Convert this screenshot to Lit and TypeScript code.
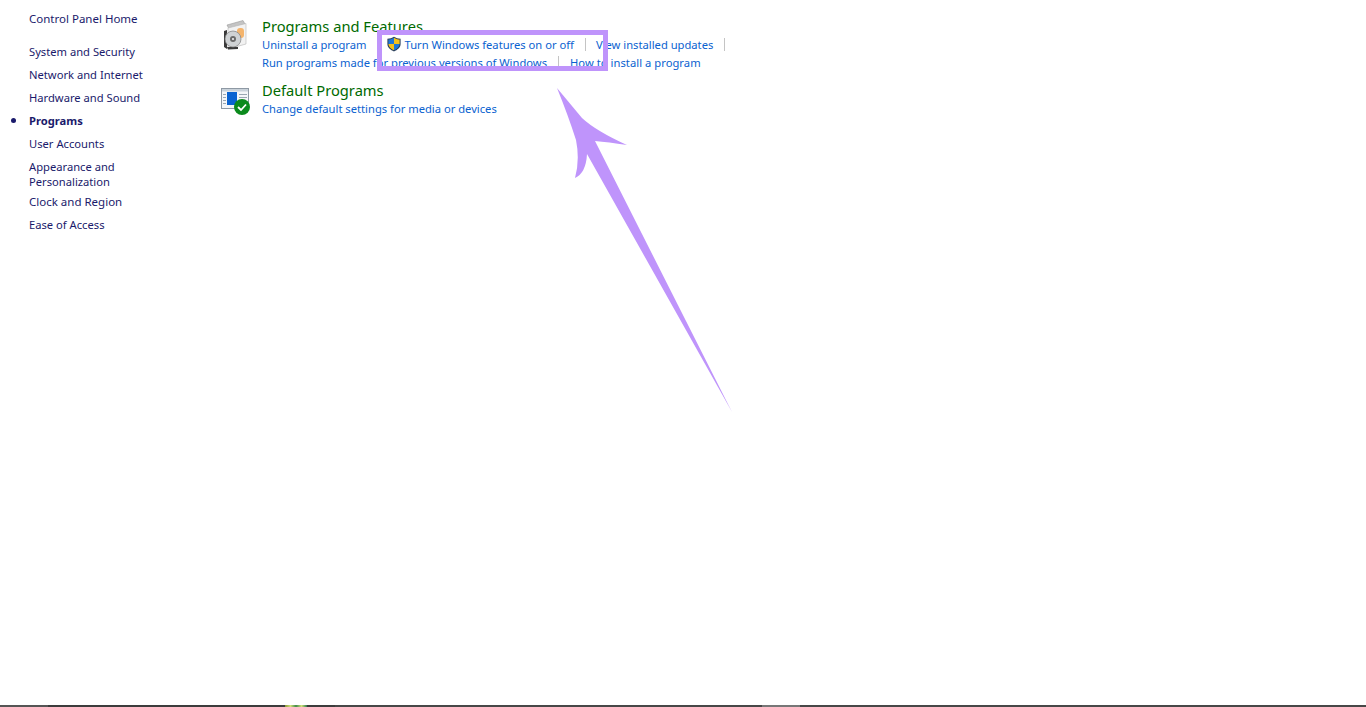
import { LitElement, html, css, svg } from "lit";
import { customElement } from "lit/decorators.js";

const nav = ["System and Security", "Network and Internet", "Hardware and Sound", "Programs", "User Accounts"];

@customElement("app-root")
export class AppRoot extends LitElement {
  static styles = css`
    :host { display: flex; flex-direction: column; height: 707px; position: relative; background: #fff; overflow: hidden;
      font-family: "Noto Sans", "Open Sans", sans-serif; font-size: 11.2px; line-height: 15px; }
    .main { flex: 1; display: flex; min-height: 0; }
    .side { width: 220px; padding: 11px 0 0 29px; box-sizing: border-box; color: #1a1a6b; flex: none; }
    .side div { margin-bottom: 8px; position: relative; }
    .side .home { margin-bottom: 18px; font-size: 11.5px; }
    .side .wide { font-size: 11.5px; }
    .side .tight { margin-bottom: 5px; }
    .side .on { font-weight: 700; }
    .side .on::before { content: ""; position: absolute; left: -18px; top: 5px; width: 5px; height: 5px; border-radius: 50%; background: #1a1a6b; }
    .content { flex: 1; padding-top: 17px; }
    .group { display: flex; margin-bottom: 10px; }
    .ico { width: 42px; flex: none; }
    .ico svg { display: block; }
    .ico .p { margin: 3px 0 0 3px; }
    .ico .d { margin: 5px 0 0 1px; }
    h2 { margin: 0; font-weight: 400; font-size: 14.7px; line-height: 18px; color: #006a00; }
    .row { display: flex; height: 18px; align-items: center; color: #0a62d0; white-space: nowrap; }
    .row span { display: inline-flex; align-items: center; height: 13px; }
    .sep { border-right: 1px solid #c4c4c4; padding-right: 11px; margin-right: 10px; }
    .row svg { margin-right: 3px; }
    .shieldcell { margin-left: -3px; }
    .how { margin-left: 1px; letter-spacing: 0.04px; }
    .foot { height: 2px; display: flex; background: #474747; flex: none; }
    .foot i { display: block; height: 2px; }
    .f1 { width: 48px; background: #555; }
    .f2 { width: 237px; background: #3c3c3c; }
    .f3 { width: 22px; background: linear-gradient(90deg, #8a9a3a, #cfe07a, #3f8a4a, #cfe07a, #2e7a50); }
    .f4 { width: 28px; background: #3c3c3c; }
    .f5 { width: 427px; background: #474747; }
    .f6 { width: 38px; background: #777; }
    .hl { position: absolute; left: 377px; top: 30px; width: 231px; height: 41px; box-sizing: border-box; border: 5.5px solid #bf94fb; }
    .arrow { position: absolute; left: 0; top: 0; pointer-events: none; }
  `;

  render() {
    return html`
      <div class="main">
        <div class="side">
          <div class="home">Control Panel Home</div>
          ${nav.map((n) => html`<div class=${n === "Programs" ? "on" : ""}>${n}</div>`)}
          <div class="tight">Appearance and<br />Personalization</div>
          <div class="wide">Clock and Region</div>
          <div>Ease of Access</div>
        </div>
        <div class="content">
          <div class="group">
            <div class="ico">${this.programsIcon()}</div>
            <div>
              <h2>Programs and Features</h2>
              <div class="row">
                <span class="sep">Uninstall a program</span>
                <span class="shieldcell">${this.shield()}</span>
                <span class="sep">Turn Windows features on or off</span>
                <span class="sep">View installed updates</span>
              </div>
              <div class="row">
                <span class="sep">Run programs made for previous versions of Windows</span>
                <span class="how">How to install a program</span>
              </div>
            </div>
          </div>
          <div class="group">
            <div class="ico">${this.defaultIcon()}</div>
            <div>
              <h2>Default Programs</h2>
              <div class="row"><span>Change default settings for media or devices</span></div>
            </div>
          </div>
        </div>
      </div>
      <div class="foot">
        <i class="f1"></i><i class="f2"></i><i class="f3"></i><i class="f4"></i><i class="f5"></i><i class="f6"></i>
      </div>
      <div class="hl"></div>
      <svg class="arrow" width="1366" height="707" viewBox="0 0 1366 707">
        <path fill="#bf94fb" d="M557 88 Q572 106 582 118 Q596 131 627 145 Q608 142 595 141 L732 412 L587 154 Q586 173 575 178 Q580 160 576 140 Q568 115 557 88 Z" />
      </svg>
    `;
  }

  shield() {
    return svg`<svg width="16" height="16" viewBox="0 0 16 16">
      <path d="M8 .7 C6 2 4 2.6 1.4 2.7 V8 C1.4 11.5 4.5 14 8 15.4 C11.5 14 14.6 11.5 14.6 8 V2.7 C12 2.6 10 2 8 .7Z" fill="#2a3f5c"/>
      <path d="M8 1.8 V8 H2.4 V3.6 C4.4 3.5 6.3 3 8 1.8Z" fill="#1f78d6"/>
      <path d="M8 1.8 C9.7 3 11.6 3.5 13.6 3.6 V8 H8Z" fill="#f5c21b"/>
      <path d="M2.4 8 H8 V14.2 C5 13 2.6 11 2.4 8Z" fill="#f5c21b"/>
      <path d="M8 8 H13.6 C13.4 11 11 13 8 14.2Z" fill="#1f78d6"/>
    </svg>`;
  }

  programsIcon() {
    return svg`<svg class="p" width="26" height="30" viewBox="0 0 26 30">
      <path d="M4 5 L20 0.5 L22 4 L6 9Z" fill="#c4c4c4" stroke="#9a9a9a" stroke-width=".6"/>
      <path d="M5 8 L23 3.5 V24 L5 29Z" fill="#f2f2f2" stroke="#b5b5b5" stroke-width=".6"/>
      <rect x="14" y="8" width="7" height="10" rx="3" fill="#f4b46c"/>
      <path d="M1 11 L4 10 V29 L1 27Z" fill="#3a3a3a"/>
      <path d="M4 27 H15 L15 29 L5 29.5Z" fill="#3a3a3a"/>
      <circle cx="10" cy="19" r="8" fill="#cfd2d4" stroke="#7c7c7c" stroke-width=".7"/>
      <circle cx="10" cy="19" r="3" fill="#6a6a6a"/>
      <circle cx="10" cy="19" r="1.1" fill="#eee"/>
    </svg>`;
  }

  defaultIcon() {
    return svg`<svg class="d" width="30" height="30" viewBox="0 0 30 30">
      <rect x=".5" y="2.5" width="27" height="20" fill="#f4f6f8" stroke="#8e99a4"/>
      <rect x="1" y="3" width="26" height="2.5" fill="#c9d2da"/>
      <rect x="6" y="6" width="10" height="13" fill="#0a63d1"/>
      <path d="M2 8.5h3M2 11.5h3M2 14.5h3M2 17.5h3M18 8.5h8M18 11.5h8" stroke="#9aa6b2"/>
      <circle cx="21" cy="21" r="8" fill="#0b8a1c"/>
      <path d="M17 21 l3 3 l5 -5.5" fill="none" stroke="#fff" stroke-width="1.8"/>
    </svg>`;
  }
}
